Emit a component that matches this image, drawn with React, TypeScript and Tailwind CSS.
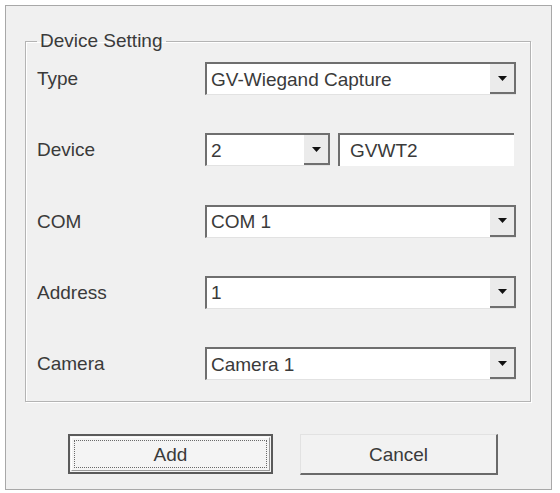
import React from "react";

const font = { fontFamily: '"Liberation Sans", Arial, sans-serif' };

function Arrow() {
  return (
    <svg width="9" height="5" viewBox="0 0 9 5" className="block">
      <path d="M0 0 H9 L4.5 5 Z" fill="#111" />
    </svg>
  );
}

function Combo({ value, className = "" }: { value: string; className?: string }) {
  return (
    <div
      className={`flex h-[33px] bg-white border-t-2 border-l-2 border-[#6f6f6f] border-b border-b-[#e2e2e2] ${className}`}
    >
      <div className="flex-1 flex items-center pl-[4px] text-[19px] text-[#3a3a3a] leading-none">
        {value}
      </div>
      <div className="w-[26px] h-full bg-[#ebebeb] border-r-2 border-b-2 border-[#6f6f6f] flex items-center justify-center">
        <Arrow />
      </div>
    </div>
  );
}

export default function App() {
  const rows: [string, React.ReactNode][] = [
    ["Type", <Combo value="GV-Wiegand Capture" className="w-[311px]" />],
    [
      "Device",
      <div className="flex gap-[8px]">
        <Combo value="2" className="w-[125px]" />
        <div className="w-[176px] h-[33px] bg-white border-t-2 border-l-2 border-[#6f6f6f] flex items-center pl-[10px] text-[19px] text-[#3a3a3a] leading-none">
          GVWT2
        </div>
      </div>,
    ],
    ["COM", <Combo value="COM 1" className="w-[311px]" />],
    ["Address", <Combo value="1" className="w-[311px]" />],
    ["Camera", <Combo value="Camera 1" className="w-[311px]" />],
  ];

  return (
    <div className="w-[560px] h-[493px] bg-white pt-[5px] pl-[5px]" style={font}>
      <div className="w-[547px] h-[485px] border border-[#a8a8a8] bg-[#f0f0f0] pl-[19px] pt-[24px]">
        <fieldset className="w-[506px] h-[372px] border border-[#b4b4b4] shadow-[inset_1px_1px_0_#ffffff,1px_1px_0_#ffffff] px-[11px] pt-[10px]">
          <legend className="ml-0 px-[3px] text-[19px] leading-[22px] text-[#3a3a3a]">
            Device Setting
          </legend>
          <div className="flex flex-col gap-[38.25px]">
            {rows.map(([label, ctrl]) => (
              <div key={label} className="flex items-center h-[33px]">
                <div className="w-[168px] text-[19px] text-[#3a3a3a] leading-none">{label}</div>
                {ctrl}
              </div>
            ))}
          </div>
        </fieldset>
        <div className="flex gap-[27px] pl-[43px] pt-[32px]">
          <div className="w-[205px] h-[40px] border-2 border-[#5a5a5a] bg-[#f4f4f4] p-[1px]">
            <div className="w-full h-full border-t border-l border-white border-r border-b border-r-[#9a9a9a] border-b-[#9a9a9a] p-[2px]">
              <div className="w-full h-full border border-dotted border-[#6a6a6a] flex items-center justify-center text-[19px] text-[#3a3a3a] leading-none">
                Add
              </div>
            </div>
          </div>
          <div className="w-[198px] h-[41px] bg-[#f2f2f2] border-t border-l border-[#e2e2e2] border-r-2 border-b-2 border-r-[#6a6a6a] border-b-[#6a6a6a] flex items-center justify-center text-[19px] text-[#3a3a3a] leading-none">
            Cancel
          </div>
        </div>
      </div>
    </div>
  );
}
